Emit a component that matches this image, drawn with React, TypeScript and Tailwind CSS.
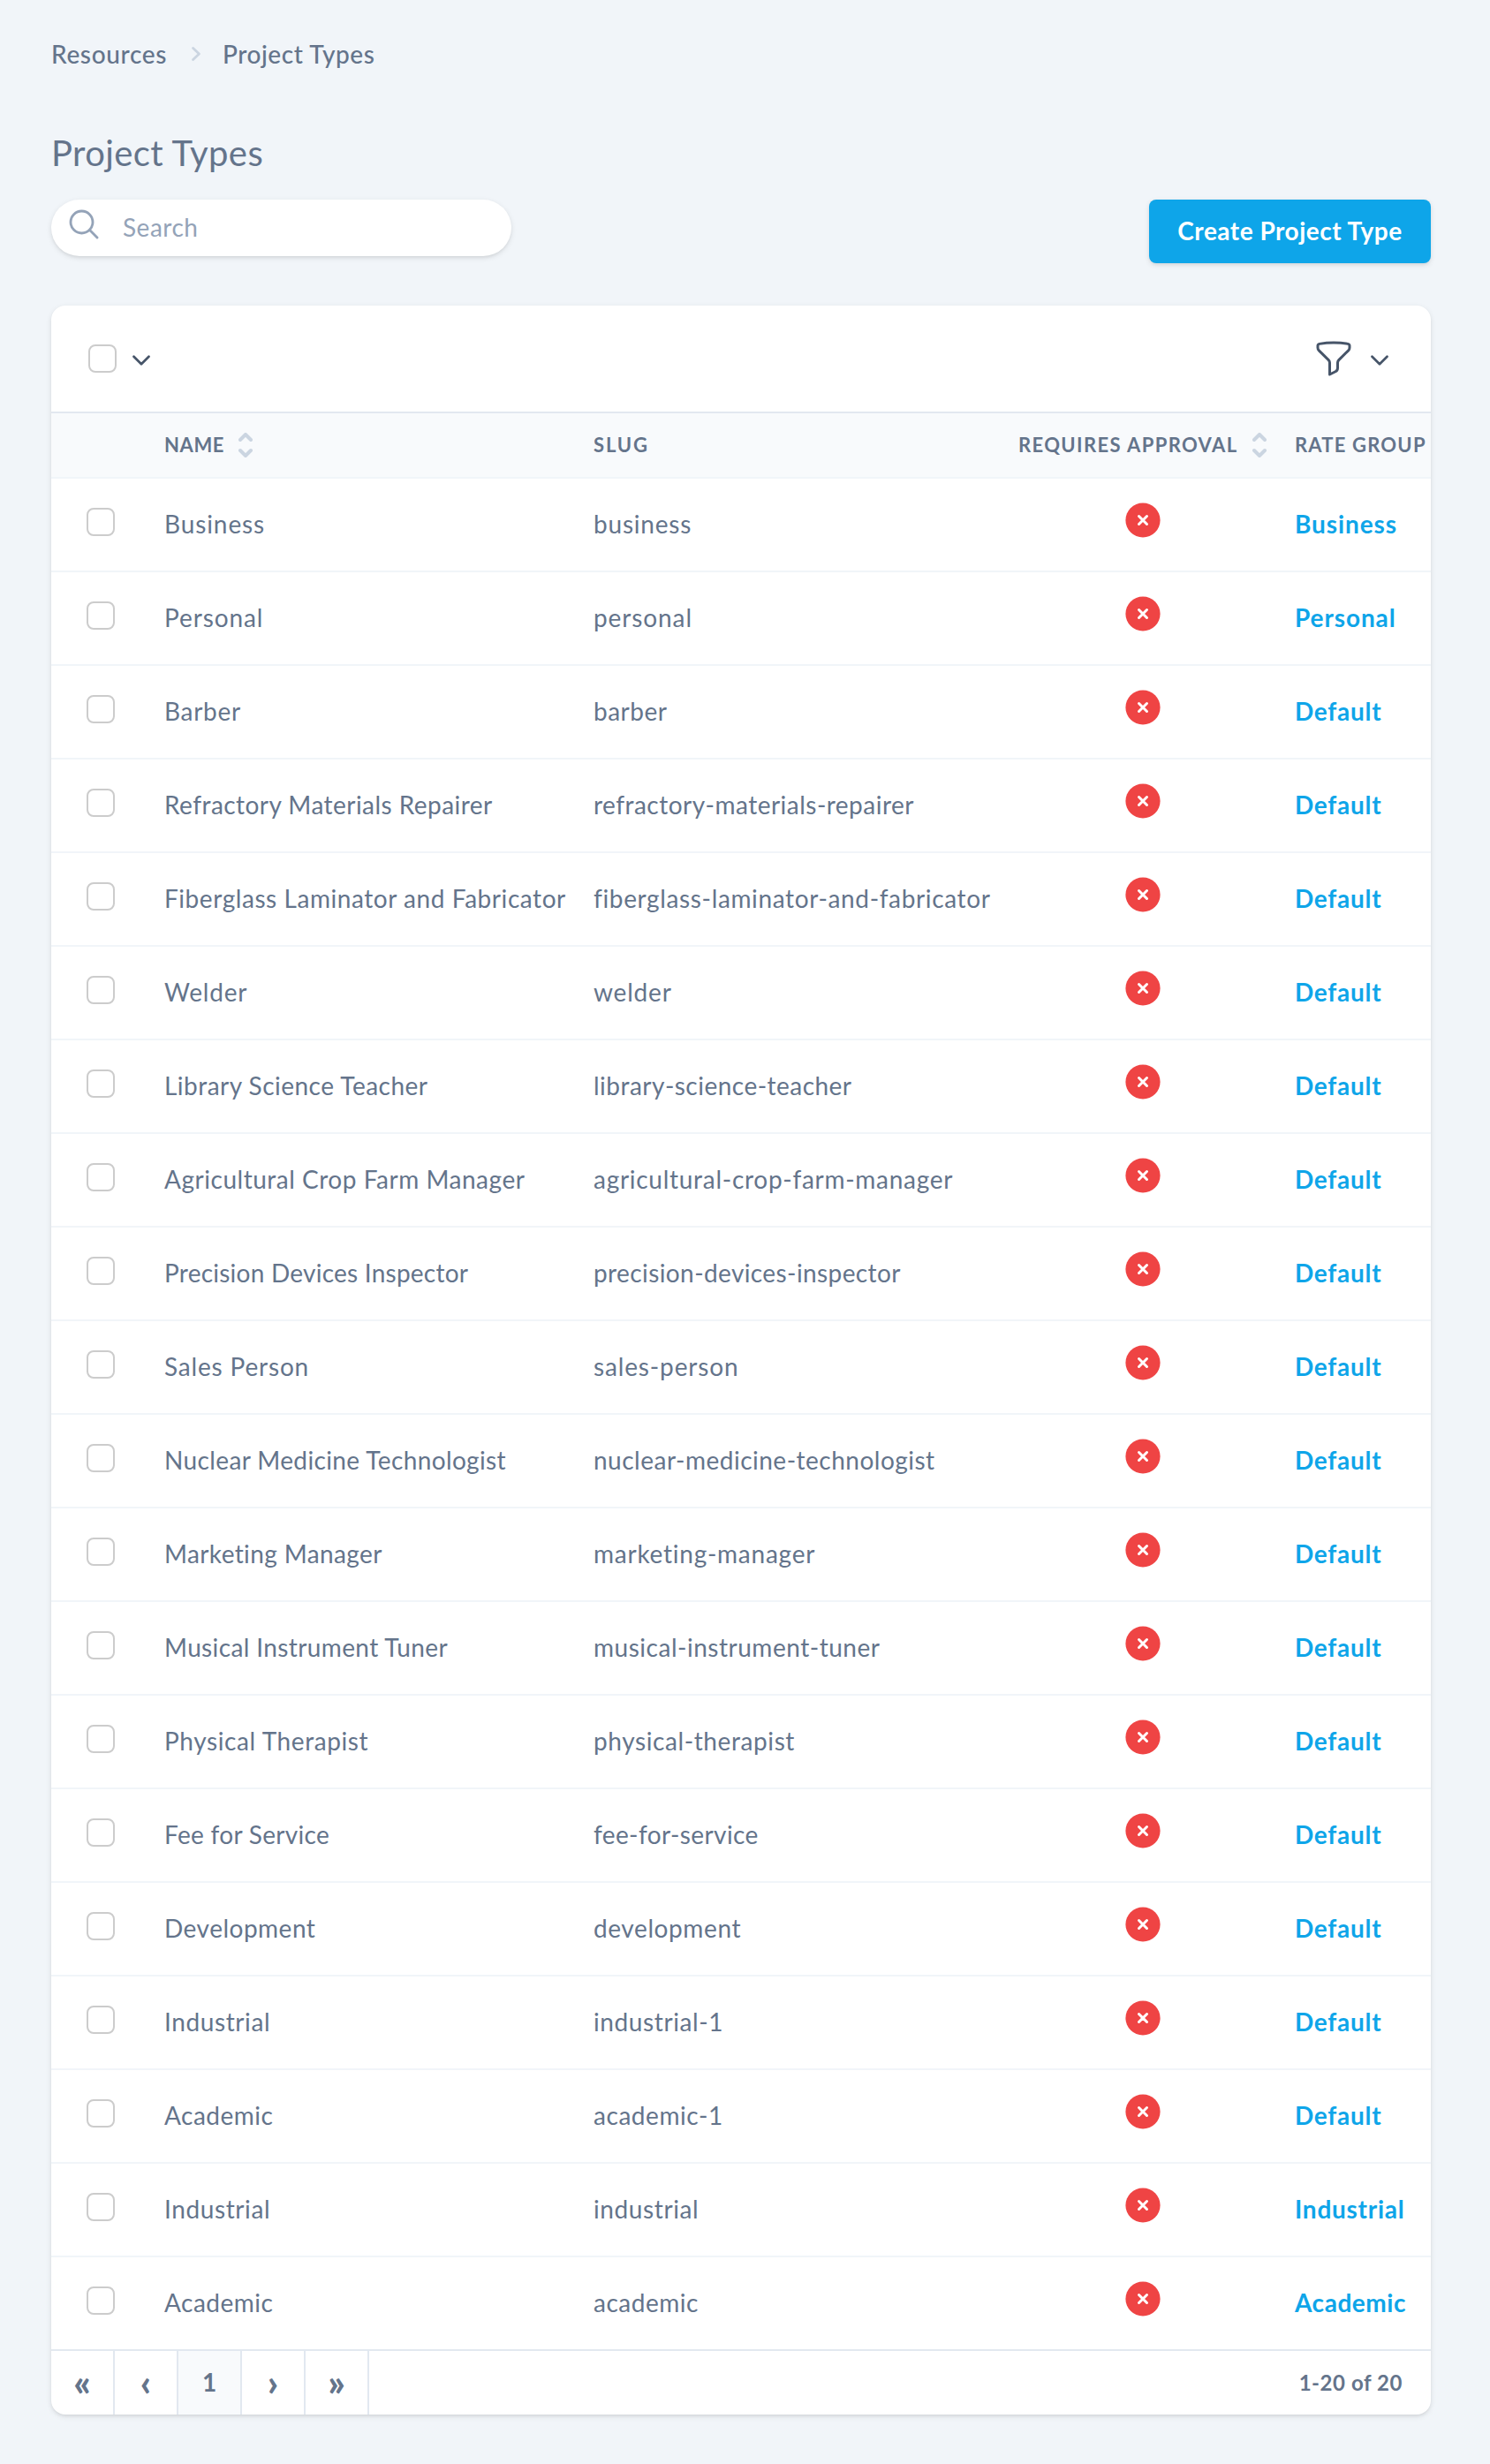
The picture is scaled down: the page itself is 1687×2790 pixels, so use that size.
import React from "react";

type Row = {
  name: string;
  slug: string;
  group: string;
  nameTracking: string;
  slugTracking: string;
};

const rows: Row[] = [
  { name: "Business", slug: "business", group: "Business", nameTracking: "tracking-[0.9px]", slugTracking: "tracking-[0.8px]" },
  { name: "Personal", slug: "personal", group: "Personal", nameTracking: "tracking-[0.9px]", slugTracking: "tracking-[0.9px]" },
  { name: "Barber", slug: "barber", group: "Default", nameTracking: "tracking-[0.7px]", slugTracking: "tracking-[0.5px]" },
  { name: "Refractory Materials Repairer", slug: "refractory-materials-repairer", group: "Default", nameTracking: "tracking-[0.46px]", slugTracking: "tracking-[0.48px]" },
  { name: "Fiberglass Laminator and Fabricator", slug: "fiberglass-laminator-and-fabricator", group: "Default", nameTracking: "tracking-[0.56px]", slugTracking: "tracking-[0.64px]" },
  { name: "Welder", slug: "welder", group: "Default", nameTracking: "tracking-[0.8px]", slugTracking: "tracking-[0.8px]" },
  { name: "Library Science Teacher", slug: "library-science-teacher", group: "Default", nameTracking: "tracking-[0.48px]", slugTracking: "tracking-[0.48px]" },
  { name: "Agricultural Crop Farm Manager", slug: "agricultural-crop-farm-manager", group: "Default", nameTracking: "tracking-[0.52px]", slugTracking: "tracking-[0.72px]" },
  { name: "Precision Devices Inspector", slug: "precision-devices-inspector", group: "Default", nameTracking: "tracking-[0.24px]", slugTracking: "tracking-[0.4px]" },
  { name: "Sales Person", slug: "sales-person", group: "Default", nameTracking: "tracking-[0.82px]", slugTracking: "tracking-[0.86px]" },
  { name: "Nuclear Medicine Technologist", slug: "nuclear-medicine-technologist", group: "Default", nameTracking: "tracking-[0.38px]", slugTracking: "tracking-[0.5px]" },
  { name: "Marketing Manager", slug: "marketing-manager", group: "Default", nameTracking: "tracking-[0.38px]", slugTracking: "tracking-[0.75px]" },
  { name: "Musical Instrument Tuner", slug: "musical-instrument-tuner", group: "Default", nameTracking: "tracking-[0.38px]", slugTracking: "tracking-[0.52px]" },
  { name: "Physical Therapist", slug: "physical-therapist", group: "Default", nameTracking: "tracking-[0.6px]", slugTracking: "tracking-[0.6px]" },
  { name: "Fee for Service", slug: "fee-for-service", group: "Default", nameTracking: "tracking-[0.3px]", slugTracking: "tracking-[0.4px]" },
  { name: "Development", slug: "development", group: "Default", nameTracking: "tracking-[0.5px]", slugTracking: "tracking-[0.6px]" },
  { name: "Industrial", slug: "industrial-1", group: "Default", nameTracking: "tracking-[0.6px]", slugTracking: "tracking-[0.6px]" },
  { name: "Academic", slug: "academic-1", group: "Default", nameTracking: "tracking-[0.5px]", slugTracking: "tracking-[0.55px]" },
  { name: "Industrial", slug: "industrial", group: "Industrial", nameTracking: "tracking-[0.6px]", slugTracking: "tracking-[0.6px]" },
  { name: "Academic", slug: "academic", group: "Academic", nameTracking: "tracking-[0.5px]", slugTracking: "tracking-[0.5px]" },
];

const groupTracking: Record<string, string> = {
  Business: "tracking-[0.9px]",
  Personal: "tracking-[0.9px]",
  Default: "tracking-[0.75px]",
  Industrial: "tracking-[0.75px]",
  Academic: "tracking-[0.55px]",
};

const columns = "grid grid-cols-[128px_486px_481px_313px_1fr]";

function Checkbox() {
  return <span role="checkbox" aria-checked={false} className="block size-8 shrink-0 rounded-lg border-2 border-[#cccccc] bg-white" />;
}

function ChevronDown() {
  return (
    <svg viewBox="0 0 10 6" className="h-3 w-5 shrink-0" fill="none" stroke="#475569" strokeWidth="1.35" strokeLinecap="round" strokeLinejoin="round">
      <path d="M.75.85 5 5.1 9.25.85" />
    </svg>
  );
}

function SortIcon() {
  return (
    <svg viewBox="0 0 16 28" className="h-7 w-4 shrink-0" fill="none" stroke="#cbd5e1" strokeWidth="4" strokeLinecap="round" strokeLinejoin="round">
      <path d="m2 8 6-6 6 6M2 20l6 6 6-6" />
    </svg>
  );
}

function FunnelIcon() {
  return (
    <svg viewBox="0 0 24 24" className="size-12" fill="none" stroke="#475569" strokeWidth="1.5" strokeLinecap="round" strokeLinejoin="round">
      <path d="M12 3c2.755 0 5.455.232 8.083.678.533.09.917.556.917 1.096v1.044a2.25 2.25 0 01-.659 1.591l-5.432 5.432a2.25 2.25 0 00-.659 1.591v2.927a2.25 2.25 0 01-1.244 2.013L9.75 21v-6.568a2.25 2.25 0 00-.659-1.591L3.659 7.409A2.25 2.25 0 013 5.818V4.774c0-.54.384-1.006.917-1.096A48.32 48.32 0 0112 3z" />
    </svg>
  );
}

function SearchIcon() {
  return (
    <svg viewBox="0 0 24 24" className="mb-2 size-10 shrink-0" fill="none" stroke="#94a3b8" strokeWidth="1.7" strokeLinecap="round" strokeLinejoin="round">
      <path d="M21 21l-5.197-5.197m0 0A7.5 7.5 0 105.196 5.196a7.5 7.5 0 0010.607 10.607z" />
    </svg>
  );
}

function CrossBadge() {
  return (
    <svg viewBox="0 0 24 24" className="size-12" aria-label="No">
      <circle cx="12" cy="12" r="9.8" fill="#ef4444" />
      <path d="m9.75 9.75 4.5 4.5m0-4.5-4.5 4.5" stroke="#fff" strokeWidth="1.5" strokeLinecap="round" />
    </svg>
  );
}

const pageCell = "flex w-[72px] items-center justify-center border-r-2 border-[#e2e8f0]";
const arrow = "pb-0.5 text-[42px] leading-none font-black";

export default function App() {
  return (
    <main className="flex min-h-[2790px] w-[1687px] flex-col bg-[#f1f5f9] pt-[41px] pr-[67px] pl-[58px] font-['Lato',sans-serif] text-[28px] text-[#64748b]">
      <nav className="flex h-10 items-center font-medium leading-10">
        <span className="w-[159px] tracking-[0.65px]">Resources</span>
        <svg viewBox="0 0 10 16" className="h-4 w-2.5" fill="none" stroke="#cbd5e1" strokeWidth="2.8" strokeLinecap="round" strokeLinejoin="round">
          <path d="M1.6 1.5 8.4 8l-6.8 6.5" />
        </svg>
        <span className="ml-[25px] tracking-[0.55px]">Project Types</span>
      </nav>

      <h1 className="mt-[72px] text-[40px] leading-10 tracking-[0.4px]">Project Types</h1>

      <div className="mt-[33px] flex items-start justify-between">
        <label className="flex h-16 w-[521px] items-center gap-6 rounded-full bg-white pl-[17px] shadow-[0_2px_6px_rgba(0,0,0,0.1),0_2px_4px_-2px_rgba(0,0,0,0.1)]">
          <SearchIcon />
          <span className="pb-0.5 leading-10 tracking-[0.5px] text-[#94a3b8]">Search</span>
        </label>
        <button className="h-[72px] w-[319px] rounded-lg bg-[#0ea5e9] pb-0.5 text-center font-bold tracking-[0.5px] text-white shadow-[0_2px_6px_rgba(0,0,0,0.1),0_2px_4px_-2px_rgba(0,0,0,0.1)]">
          Create Project Type
        </button>
      </div>

      <section className="mt-12 flex flex-col overflow-hidden rounded-2xl bg-white shadow-[0_2px_6px_rgba(0,0,0,0.1),0_2px_4px_-2px_rgba(0,0,0,0.1)]">
        <div className="flex h-[120px] items-center justify-between pr-12 pl-[42px]">
          <div className="flex items-center gap-[18px]">
            <Checkbox />
            <span className="pt-1">
              <ChevronDown />
            </span>
          </div>
          <div className="flex items-center gap-[18px]">
            <FunnelIcon />
            <span className="pt-1">
              <ChevronDown />
            </span>
          </div>
        </div>

        <div className={`${columns} h-[76px] items-center overflow-hidden border-y-2 border-t-[#e2e8f0] border-b-[#f1f5f9] bg-[#f8fafc] text-[22px] font-bold whitespace-nowrap`}>
          <span />
          <span className="flex items-center">
            <span className="w-[84px] pb-px tracking-[0.6px]">NAME</span>
            <SortIcon />
          </span>
          <span className="pb-px tracking-[1.9px]">SLUG</span>
          <span className="flex items-center">
            <span className="w-[265px] pb-px tracking-[1.38px]">REQUIRES APPROVAL</span>
            <SortIcon />
          </span>
          <span className="pb-px tracking-[1.2px]">RATE GROUP</span>
        </div>

        {rows.map((row, i) => (
          <div
            key={row.slug}
            className={`${columns} h-[106px] items-center border-b-2 whitespace-nowrap ${i === rows.length - 1 ? "border-[#e2e8f0]" : "border-[#f1f5f9]"}`}
          >
            <span className="pb-1.5 pl-10">
              <Checkbox />
            </span>
            <span className={`pb-0.5 ${row.nameTracking}`}>{row.name}</span>
            <span className={`pb-0.5 ${row.slugTracking}`}>{row.slug}</span>
            <span className="pb-2.5 pl-[117px]">
              <CrossBadge />
            </span>
            <a className={`pb-0.5 font-bold text-[#0ea5e9] ${groupTracking[row.group]}`}>{row.group}</a>
          </div>
        ))}

        <footer className="flex h-[72px] font-bold">
          <span className={pageCell}>
            <span className={arrow}>«</span>
          </span>
          <span className={pageCell}>
            <span className={arrow}>‹</span>
          </span>
          <span className={`${pageCell} bg-[#f8fafc] pb-0.5`}>1</span>
          <span className={pageCell}>
            <span className={arrow}>›</span>
          </span>
          <span className={pageCell}>
            <span className={arrow}>»</span>
          </span>
          <span className="ml-auto self-center pr-8 pb-px text-2xl tracking-[0.55px]">1-20 of 20</span>
        </footer>
      </section>
    </main>
  );
}
